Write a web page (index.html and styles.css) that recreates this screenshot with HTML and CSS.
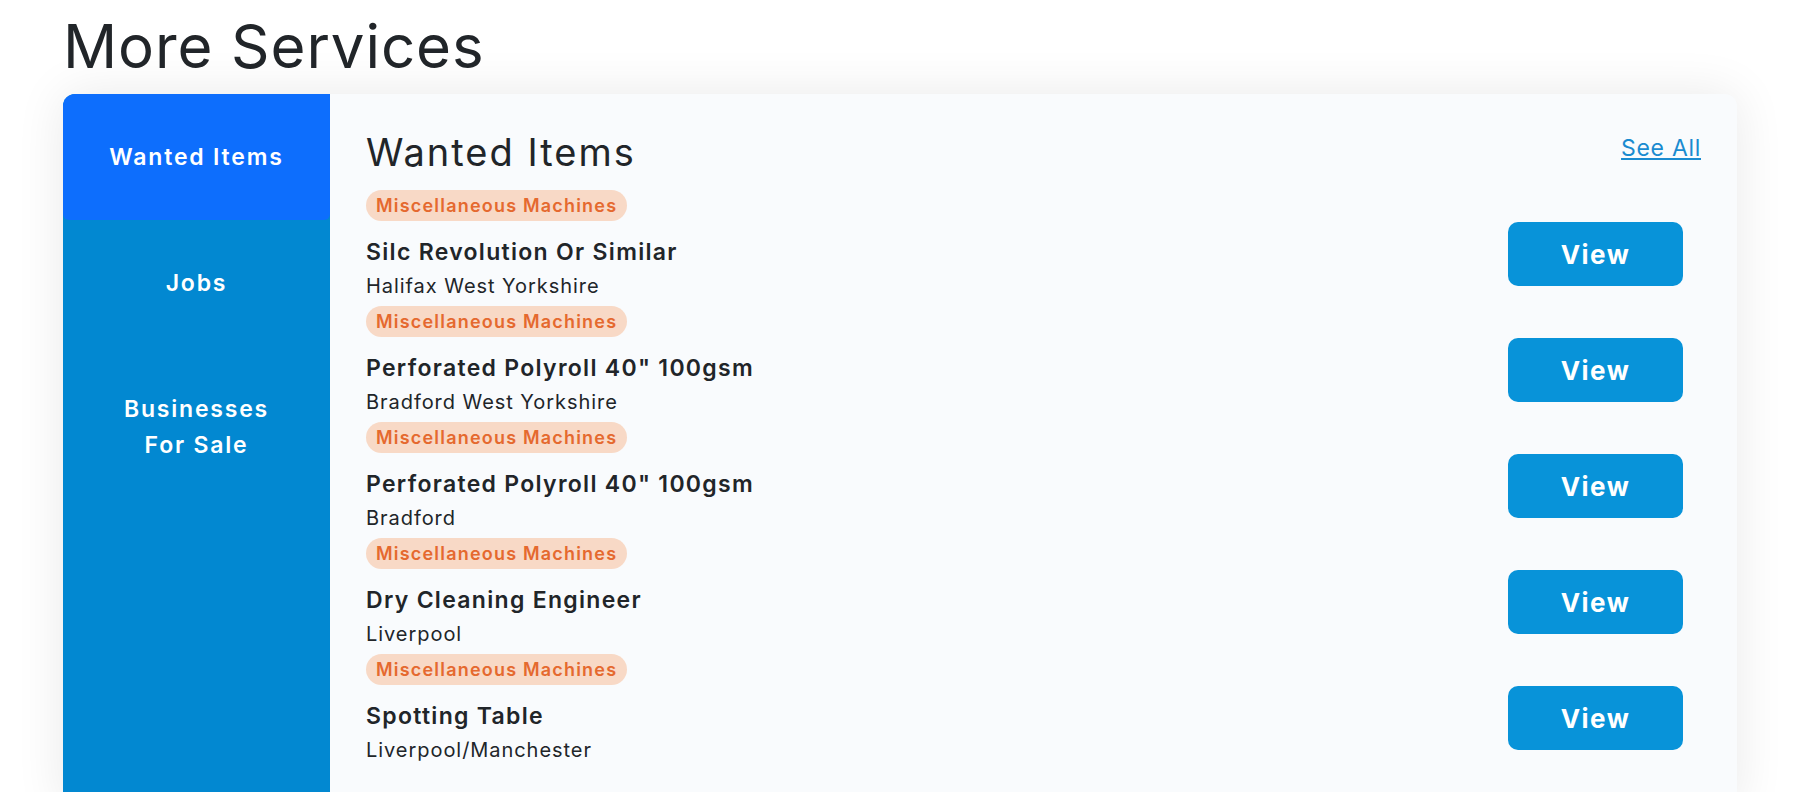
FILE: index.html
```html
<!DOCTYPE html>
<html lang="en">
<head>
    <meta charset="UTF-8">
    <meta name="viewport" content="width=device-width, initial-scale=1.0">
    <title>More Services</title>
    <link rel="stylesheet" href="styles.css">
</head>
<body>
    <div class="container">
        <h1 class="page-title">More Services</h1>

        <div class="services-card">
            <nav class="services-nav">
                <a href="#" class="nav-item active">Wanted Items</a>
                <a href="#" class="nav-item">Jobs</a>
                <a href="#" class="nav-item">Businesses<br>For Sale</a>
            </nav>

            <div class="services-content">
                <div class="content-header">
                    <h2>Wanted Items</h2>
                    <a href="#" class="see-all">See All</a>
                </div>
                <div class="item-list" id="item-list">
                    <!-- items go here -->
                </div>
            </div>
        </div>
    </div>

    <script>
        // wanted items
        const items = [
            { title: "Silc Revolution Or Similar", place: "Halifax West Yorkshire", tag: "Miscellaneous Machines" },
            { title: "Perforated Polyroll 40\" 100gsm", place: "Bradford West Yorkshire", tag: "Miscellaneous Machines" },
            { title: "Perforated Polyroll 40\" 100gsm", place: "Bradford", tag: "Miscellaneous Machines" },
            { title: "Dry Cleaning Engineer", place: "Liverpool", tag: "Miscellaneous Machines" },
            { title: "Spotting Table", place: "Liverpool/Manchester", tag: "Miscellaneous Machines" }
        ];

        const list = document.getElementById('item-list');

        items.forEach(item => {
            const div = document.createElement('div');
            div.className = 'item';
            div.innerHTML = `
                <span class="item-tag">${item.tag}</span>
                <div class="item-row">
                    <div class="item-info">
                        <div class="item-title">${item.title.replace('"', '&quot;')}</div>
                        <div class="item-place">${item.place}</div>
                    </div>
                    <button class="view-btn">View</button>
                </div>
            `;
            list.appendChild(div);
        });
    </script>
</body>
</html>
```

FILE: styles.css
```css
:root {
    --azul: #0d6efd;
    --azul-claro: #0288d1;
    --botao: #0893d9;
    --texto: #212529;
    --laranja: #e5692f;
    --laranja-fundo: #f8d9c6;
}

* {
    margin: 0;
    padding: 0;
    box-sizing: border-box;
    font-family: Inter, "Noto Sans", sans-serif;
}

body {
    background-color: #ffffff;
    color: var(--texto);
}

.container {
    padding: 0 57px 0 63px;
}

.page-title {
    font-size: 60px;
    font-weight: 400;
    line-height: 72px;
    padding-top: 10px;
    margin-bottom: 12px;
    letter-spacing: 0.9px;
}

.services-card {
    display: flex;
    border-radius: 12px;
    overflow: hidden;
    background-color: #f9fbfd;
    box-shadow: 0 0 50px rgba(0,0,0,0.09);
}

.services-nav {
    width: 267px;
    flex-shrink: 0;
    background-color: var(--azul-claro);
    display: flex;
    flex-direction: column;
}

.nav-item {
    display: block;
    padding: 45px 10px;
    line-height: 36px;
    font-size: 23px;
    font-weight: 600;
    letter-spacing: 1.8px;
    color: #ffffff;
    text-align: center;
    text-decoration: none;
}

.nav-item.active {
    background-color: var(--azul);
    border-radius: 0 0 6px 6px;
}

.services-content {
    flex: 1;
    padding: 36px 36px 40px 36px;
}

.content-header {
    display: flex;
    justify-content: space-between;
    align-items: flex-start;
    margin-bottom: 16px;
}

.content-header h2 {
    font-size: 38px;
    font-weight: 400;
    line-height: 44px;
    letter-spacing: 2px;
}

.see-all {
    font-size: 23px;
    line-height: 28px;
    margin-top: 4px;
    letter-spacing: 0.7px;
    color: #1a8bd0;
}

.item {
    margin-bottom: 5px;
}

.item-tag {
    display: inline-block;
    background-color: var(--laranja-fundo);
    color: var(--laranja);
    font-size: 18px;
    font-weight: 600;
    line-height: 27px;
    letter-spacing: 1.2px;
    padding: 2px 10px;
    border-radius: 16px;
}

.item-row {
    display: flex;
    justify-content: space-between;
    align-items: flex-start;
}

.item-info {
    padding-top: 13px;
}

.item-title {
    font-size: 23px;
    font-weight: 600;
    line-height: 36px;
    letter-spacing: 1.3px;
}

.item-place {
    font-size: 20px;
    line-height: 30px;
    margin-top: 1px;
    letter-spacing: 0.95px;
}

.view-btn {
    background-color: var(--botao);
    color: #ffffff;
    border: none;
    border-radius: 10px;
    width: 175px;
    height: 64px;
    margin-top: 1px;
    margin-right: 18px;
    font-size: 26px;
    font-weight: 700;
    letter-spacing: 1.5px;
    cursor: pointer;
}
```
